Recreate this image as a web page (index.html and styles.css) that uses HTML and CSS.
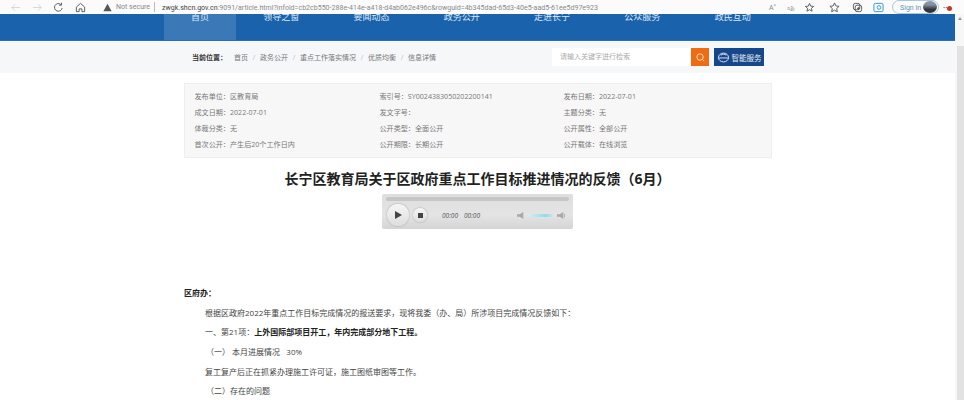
FILE: index.html
```html
<!DOCTYPE html>
<html lang="zh-CN">
<head>
  <meta charset="UTF-8" />
  <title>长宁区教育局关于区政府重点工作目标推进情况的反馈（6月）</title>
  <link rel="stylesheet" href="styles.css">
</head>
<body>

<!-- Browser toolbar -->
<div class="toolbar">
  <svg class="tool tool-back" viewBox="0 0 12 12"><path d="M11 6H2M5.5 2.5L2 6l3.500 3.500" /></svg>
  <svg class="tool tool-forward" viewBox="0 0 12 12"><path d="M1 6h9M6.500 2.500L10 6l-3.500 3.500" /></svg>
  <svg class="tool tool-reload" viewBox="0 0 12 12"><path d="M10 6.500A4.200 4.200 0 1 1 8.700 2.800M9.300 0.800v2.700H6.600" /></svg>
  <svg class="tool tool-home" viewBox="0 0 12 12"><path d="M1.500 5.500L6 1.500l4.500 4v5h-3V7.500h-3v3h-3z" /></svg>
  <svg class="warn" viewBox="0 0 12 12"><path d="M6 1l5.500 10H.5z" /></svg>
  <span class="not-secure">Not secure</span>
  <span class="url"><b>zwgk.shcn.gov.cn</b>:9091/article.html?infoid=cb2cb550-288e-414e-a418-d4ab062e496c&amp;rowguid=4b345dad-65d3-40e5-aad5-61ee5d97e923</span>
  <span class="tool-text read">A<sup>»</sup></span>
  <span class="tool-text lang">aあ</span>
  <svg class="tool tool-fav" viewBox="0 0 12 12"><path d="M6 1.500l1.300 3 3.200.3-2.400 2.100.7 3.100L6 8.400l-2.800 1.600.7-3.100-2.400-2.100 3.200-.3z" /></svg>
  <svg class="tool tool-star" viewBox="0 0 12 12"><path d="M6 1l1.500 3.300 3.500.4-2.600 2.400.7 3.500L6 8.900l-3.100 1.700.7-3.500L1 4.700l3.500-.4z" /></svg>
  <svg class="tool tool-tabs" viewBox="0 0 12 12"><rect x="1.500" y="1.500" width="7" height="7" rx="2" /><rect x="3.500" y="3.500" width="7" height="7" rx="2" /><path d="M7 5.500v3M5.500 7h3" /></svg>
  <svg class="tool tool-blue" viewBox="0 0 12 12"><rect x="1" y="1.500" width="10" height="9" rx="1.500" /><circle cx="6.500" cy="6" r="2" /></svg>
  <span class="signin">Sign in <i class="avatar"></i></span>
  <span class="dots">··<i class="badge"></i></span>
</div>

<div class="viewport">
  <div class="page">

    <!-- Main nav -->
    <div class="nav">
      <a class="nav-item active">首页</a>
      <a class="nav-item">领导之窗</a>
      <a class="nav-item">要闻动态</a>
      <a class="nav-item">政务公开</a>
      <a class="nav-item">走进长宁</a>
      <a class="nav-item">公众服务</a>
      <a class="nav-item">政民互动</a>
    </div>

    <!-- Breadcrumb and search -->
    <div class="crumbs">
      <span class="crumb-label">当前位置：</span>
      <span class="crumb">首页</span><span class="sep">/</span>
      <span class="crumb">政务公开</span><span class="sep">/</span>
      <span class="crumb">重点工作落实情况</span><span class="sep">/</span>
      <span class="crumb">优质均衡</span><span class="sep">/</span>
      <span class="crumb">信息详情</span>
      <div class="search">请输入关键字进行检索</div>
      <div class="search-btn">
        <svg viewBox="0 0 12 12"><circle cx="5.500" cy="5.500" r="3.500" /><path d="M8 8l2 2" /></svg>
      </div>
      <div class="smart-btn">
        <svg viewBox="0 0 14 12"><ellipse cx="7" cy="6" rx="5.500" ry="4.800" /><path d="M1.500 6.500h11M4 3.500c2-1.500 4-1.500 6 0" /></svg>
        智能服务
      </div>
    </div>

    <!-- Document info -->
    <div class="info">
      <div>发布单位：区教育局</div>
      <div>索引号：SY0024383050202200141</div>
      <div>发布日期：2022-07-01</div>
      <div>成文日期：2022-07-01</div>
      <div>发文字号：</div>
      <div>主题分类：无</div>
      <div>体裁分类：无</div>
      <div>公开类型：全面公开</div>
      <div>公开属性：全部公开</div>
      <div>首次公开：产生后20个工作日内</div>
      <div>公开期限：长期公开</div>
      <div>公开载体：在线浏览</div>
    </div>

    <h1>长宁区教育局关于区政府重点工作目标推进情况的反馈（6月）</h1>

    <!-- Audio player -->
    <div class="player">
      <div class="track"></div>
      <div class="controls">
        <div class="play"><svg viewBox="0 0 8 8"><path d="M1 0l7 4-7 4z" /></svg></div>
        <div class="stop"><i></i></div>
        <span class="time first">00:00</span>
        <span class="time">00:00</span>
        <svg class="vol mute" viewBox="0 0 10 10"><path d="M0 3.500h3L7 1v8L3 6.500H0z" /></svg>
        <div class="vol-bar"></div>
        <svg class="vol" viewBox="0 0 10 10"><path d="M0 3.500h3L7 1v8L3 6.500H0zM8 3v4h1V3z" /></svg>
      </div>
    </div>

    <div class="article">
      <p class="to">区府办：</p>
      <p class="indent">根据区政府2022年重点工作目标完成情况的报送要求，现将我委（办、局）所涉项目完成情况反馈如下：</p>
      <p class="indent">一、第21项：<strong>上外国际部项目开工，年内完成部分地下工程。</strong></p>
      <p class="sub">（一）&nbsp;本月进展情况&nbsp;&nbsp;&nbsp;30%</p>
      <p class="indent">复工复产后正在抓紧办理施工许可证，施工图纸审图等工作。</p>
      <p class="sub">（二）存在的问题</p>
    </div>
  </div>

  <div class="scrollbar">
    <div class="scroll-arrow"></div>
    <div class="scroll-thumb"></div>
  </div>
</div>

</body>
</html>
```

FILE: styles.css
```css
* {
  box-sizing: border-box;
}

html, body {
  margin: 0;
  height: 400px;
  overflow: hidden;
}

body {
  font-family: "Open Sans", "Noto Sans CJK SC", sans-serif;
  background-color: white;
  color: #555;
}

/* browser toolbar */
.toolbar {
  height: 14px;
  display: flex;
  align-items: center;
  background-color: #fbfbfb;
  overflow: hidden;
  font-family: Roboto, sans-serif;
  font-size: 7.050px;
  white-space: nowrap;
}

.tool {
  width: 11px;
  height: 11px;
  flex: none;
  fill: none;
  stroke: #555;
  stroke-width: 1;
}

.tool-back { margin-left: 10px; stroke: #d4d4d4; }
.tool-forward { margin-left: 11px; stroke: #d4d4d4; }
.tool-reload { margin-left: 10px; }
.tool-home { margin-left: 11px; }

.warn {
  width: 9px;
  height: 9px;
  flex: none;
  margin-left: 17px;
  fill: #555;
}

.not-secure {
  flex: none;
  margin-left: 4px;
  width: 39px;
  color: #888;
  border-right: 1px solid #bbb;
  line-height: 10px;
}

.url {
  flex: none;
  margin-left: 7px;
  width: 436px;
  color: #8a8a8a;
  overflow: hidden;
}

.url b {
  font-weight: normal;
  color: #444;
}

.tool-text {
  flex: none;
  width: 10px;
  color: #888;
}

.read { margin-left: 171px; }
.read sup { font-size: 5px; line-height: 0; }
.lang { margin-left: 8px; font-family: "Noto Sans CJK JP", sans-serif; font-size: 5px; }
.tool-fav { margin-left: 7px; }
.tool-star { margin-left: 14px; }
.tool-tabs { margin-left: 12px; }
.tool-blue { margin-left: 10px; stroke: #2a93c9; }

.signin {
  flex: none;
  margin-left: 8px;
  width: 47px;
  height: 14px;
  display: flex;
  align-items: center;
  justify-content: space-between;
  padding: 0 1px 0 7px;
  border: 1px solid #a9c8d8;
  border-radius: 8px;
  color: #5f93b0;
}

.avatar {
  width: 14px;
  height: 12px;
  border-radius: 50%;
  background: linear-gradient(#8793a5 30%, #33343a 70%);
}

.dots {
  flex: none;
  margin-left: 4px;
  display: flex;
  align-items: center;
  color: #444;
  font-weight: bold;
}

.badge {
  width: 5px;
  height: 5px;
  margin-top: 3px;
  border-radius: 50%;
  background-color: #d0341f;
}

.viewport {
  display: flex;
  height: 386px;
}

.page {
  flex: 1;
  min-width: 0;
}

/* nav, the tops of the labels sit under the toolbar */
.nav {
  height: 27px;
  display: flex;
  padding-left: 164px;
  background-color: #1a62ac;
  border-bottom: 1px solid #2a6fb3;
  overflow: hidden;
}

.nav-item {
  width: 90.300px;
  margin-top: -6px;
  text-align: center;
  font-size: 9px;
  line-height: 18px;
  color: #dfe9f5;
}

.nav-item.active {
  width: 72px;
  height: 40px;
  background-color: #3a78b8;
}

.crumbs {
  height: 32px;
  display: flex;
  align-items: center;
  padding-left: 192px;
  background-color: #f6f7f9;
  font-size: 7px;
  color: #777;
}

.crumb-label {
  width: 42px;
  font-weight: bold;
  color: #333;
}

.sep {
  width: 12px;
  text-align: center;
  color: #bbb;
}

.search {
  width: 139px;
  height: 18px;
  margin-left: 116px;
  padding-left: 8px;
  line-height: 18px;
  background-color: white;
  color: #aaa;
}

.search-btn {
  width: 18px;
  height: 18px;
  display: flex;
  align-items: center;
  justify-content: center;
  background-color: #ef6c13;
}

.search-btn svg {
  width: 11px;
  height: 11px;
  fill: none;
  stroke: #fbe3d2;
  stroke-width: 1;
}

.smart-btn {
  width: 50px;
  height: 18px;
  margin-left: 5px;
  display: flex;
  align-items: center;
  justify-content: center;
  gap: 2px;
  background-color: #17478b;
  color: #e5ecf5;
  font-size: 7.500px;
}

.smart-btn svg {
  width: 13px;
  height: 11px;
  flex: none;
  fill: none;
  stroke: #e5ecf5;
  stroke-width: 1;
}

/* info box */
.info {
  width: 588px;
  height: 75px;
  margin: 10px auto 0;
  padding: 4px 10px 0;
  display: grid;
  grid-template-columns: 185px 184px 1fr;
  grid-auto-rows: 16px;
  align-items: center;
  background-color: #f7f7f7;
  border: 1px solid #eeeeee;
  font-size: 7.100px;
  color: #777;
}

h1 {
  margin: 11px 0 0;
  text-align: center;
  font-size: 14px;
  line-height: 20px;
  font-weight: bold;
  color: #222;
}

/* audio player */
.player {
  width: 191px;
  height: 35px;
  margin: 5px auto 0;
  padding: 3px 4px 0 4px;
  background: linear-gradient(#dedede, #e4e4e4 60%, #d4d4d4);
  border-radius: 2px;
}

.track {
  height: 4px;
  border-radius: 2px;
  background-color: #c6c6c6;
}

.controls {
  height: 24px;
  margin-top: 2px;
  display: flex;
  align-items: center;
}

.play, .stop {
  display: flex;
  align-items: center;
  justify-content: center;
  flex: none;
  border-radius: 50%;
  background: linear-gradient(#f6f6f6, #dddddd);
  box-shadow: 0 0 2px #999;
}

.play {
  width: 22px;
  height: 22px;
  margin-left: 1px;
}

.play svg {
  width: 8px;
  height: 8px;
  fill: #444;
}

.stop {
  width: 14px;
  height: 14px;
  margin-left: 4px;
}

.stop i {
  width: 5px;
  height: 5px;
  background-color: #444;
}

.time {
  width: 22px;
  font-size: 6.500px;
  font-style: italic;
  text-align: center;
  color: #555;
}

.first { margin-left: 12px; }

.vol {
  width: 9px;
  height: 9px;
  margin-left: 4px;
  fill: #a9a9a9;
}

.vol.mute { margin-left: 34px; }

.vol-bar {
  width: 24px;
  height: 3px;
  margin-left: 3px;
  border-radius: 2px;
  background: linear-gradient(90deg, #d4ecf3, #8fdcf0 70%, #c9e6ee);
}

/* article body */
.article {
  margin: 54px 0 0 184px;
  width: 588px;
  font-size: 8px;
  color: #444;
}

.article p {
  margin: 0;
  height: 19.700px;
  line-height: 19.700px;
}

.article .to {
  font-weight: bold;
  color: #222;
}

.article .indent {
  padding-left: 21px;
}

.article .sub {
  padding-left: 22px;
}

.article strong {
  color: #222;
}

/* page scrollbar */
.scrollbar {
  width: 9px;
  flex: none;
  padding-left: 2px;
  background-color: #f7f7f7;
}

.scroll-arrow {
  width: 0;
  height: 0;
  margin: 3px 0 0 1px;
  border-left: 2px solid transparent;
  border-right: 2px solid transparent;
  border-bottom: 3px solid #999;
}

.scroll-thumb {
  height: 354px;
  margin-top: 26px;
  background-color: #e2e2e2;
}
```
